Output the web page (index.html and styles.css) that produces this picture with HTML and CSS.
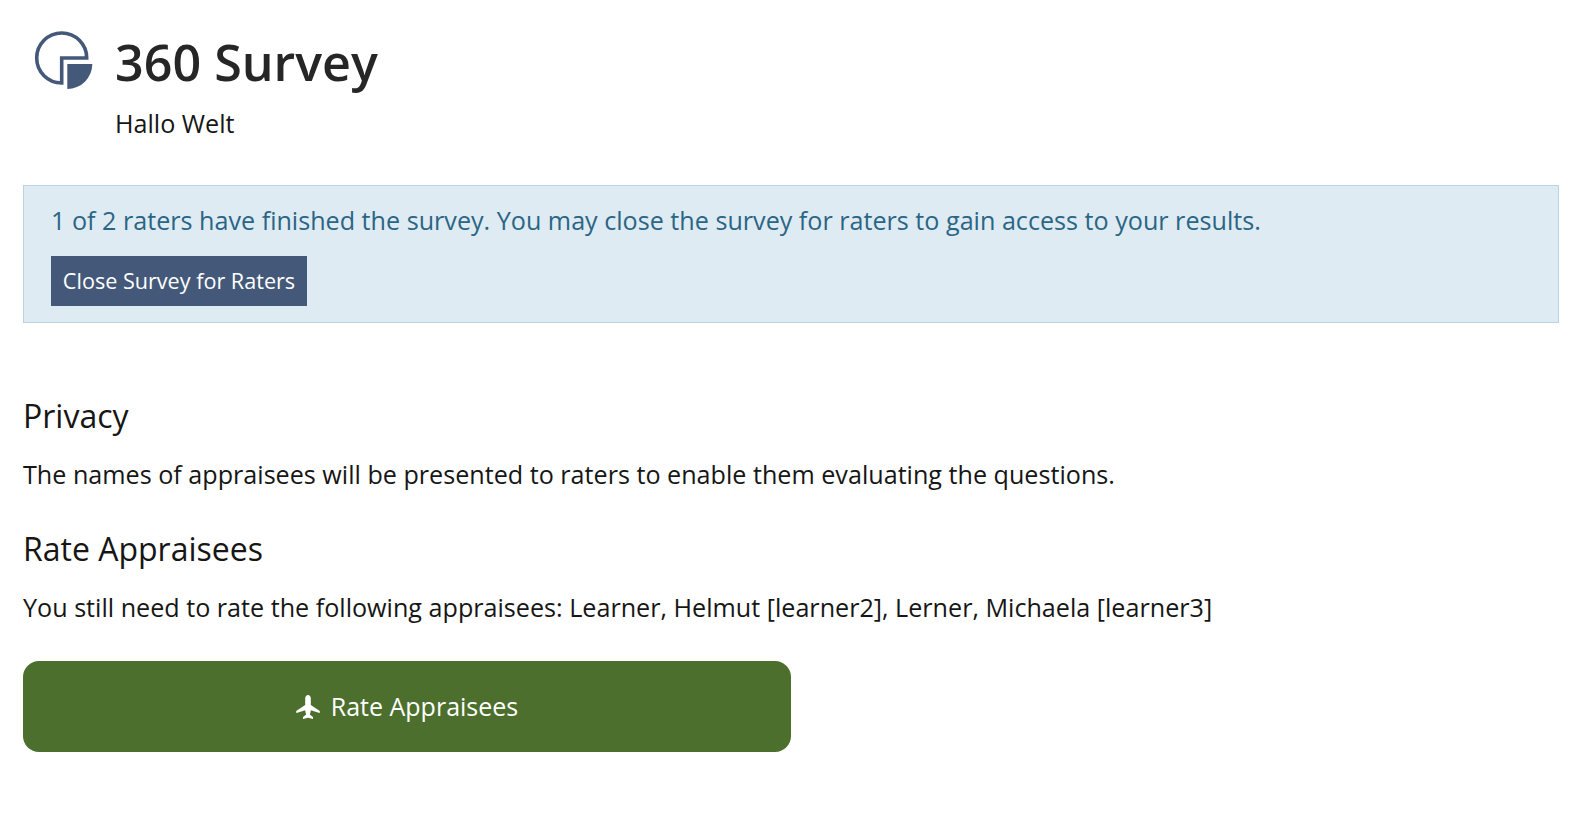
FILE: index.html
```html
<!DOCTYPE html>
<html lang="en">
<head>
<meta charset="utf-8">
<title>360 Survey</title>
<link rel="stylesheet" href="styles.css">
</head>
<body>
<header class="head">
  <svg class="logo" viewBox="0 0 60 60" width="60" height="60"><path d="M28.700 53A25 25 0 1 1 53.700 28H28.700Z" fill="none" stroke="#44597a" stroke-width="3.600"/><path d="M34.300 34H59.300A25 25 0 0 1 34.300 59Z" fill="#44597a"/></svg>
  <div class="titles">
    <h1>360 Survey</h1>
    <p class="sub">Hallo Welt</p>
  </div>
</header>
<section class="info">
  <p>1 of 2 raters have finished the survey. You may close the survey for raters to gain access to your results.</p>
  <button class="close">Close Survey for Raters</button>
</section>
<h2 class="first">Privacy</h2>
<p class="txt">The names of appraisees will be presented to raters to enable them evaluating the questions.</p>
<h2>Rate Appraisees</h2>
<p class="txt">You still need to rate the following appraisees: Learner, Helmut [learner2], Lerner, Michaela [learner3]</p>
<button class="rate"><svg viewBox="0 0 24 24" width="24" height="24"><path d="M12 0C13.500 0 14.800 1.500 14.800 3.500V10L23.500 15.800C24 16.300 24 17.500 23.500 18L14.800 15.200C14.600 17 14.200 18.500 13.800 19.500L17 22V24L12 22.800L7 24V22L10.200 19.500C9.800 18.500 9.400 17 9.200 15.200L.5 18C0 17.500 0 16.300 .5 15.800L9.200 10V3.500C9.200 1.500 10.500 0 12 0Z" fill="#fff"/></svg><span>Rate Appraisees</span></button>
</body>
</html>
```
FILE: styles.css
```css
* { box-sizing: border-box; }
body { margin: 0; padding: 23px 25px 0 23px; background: #fff; color: #161616; font-family: "Open Sans", sans-serif; font-size: 25.15px; }
.head { display: flex; gap: 21px; padding-left: 10px; height: 162px; }
.logo { flex: none; margin-top: 7px; }
.titles { padding-left: 1px; }
.titles h1 { margin: 0; font-size: 50.2px; line-height: 78px; font-weight: 600; color: #262626; }
.sub { margin: 6px 0 0; line-height: 33px; }
.info { height: 138px; border: 1px solid #b9d3e2; background: #dfebf3; padding: 18px 27px; color: #2b6585; }
.info p { margin: 0; line-height: 32px; }
.close { display: block; margin-top: 20px; width: 256px; height: 50px; border: 0; background: #44597a; color: #fff; font: 21.6px "Open Sans", sans-serif; padding: 0 0 2px; }
h2 { margin: 37px 0 0; font-size: 32px; font-weight: 400; line-height: 42px; }
h2.first { margin-top: 72px; }
.txt { margin: 21px 0 0; line-height: 33px; }
.rate { display: flex; align-items: center; justify-content: center; gap: 11px; margin-top: 37px; width: 768px; height: 91px; border: 0; border-radius: 16px; background: #4d6f2e; color: #fff; font: 25px "Open Sans", sans-serif; }
.rate span { position: relative; top: -1px; }
```
